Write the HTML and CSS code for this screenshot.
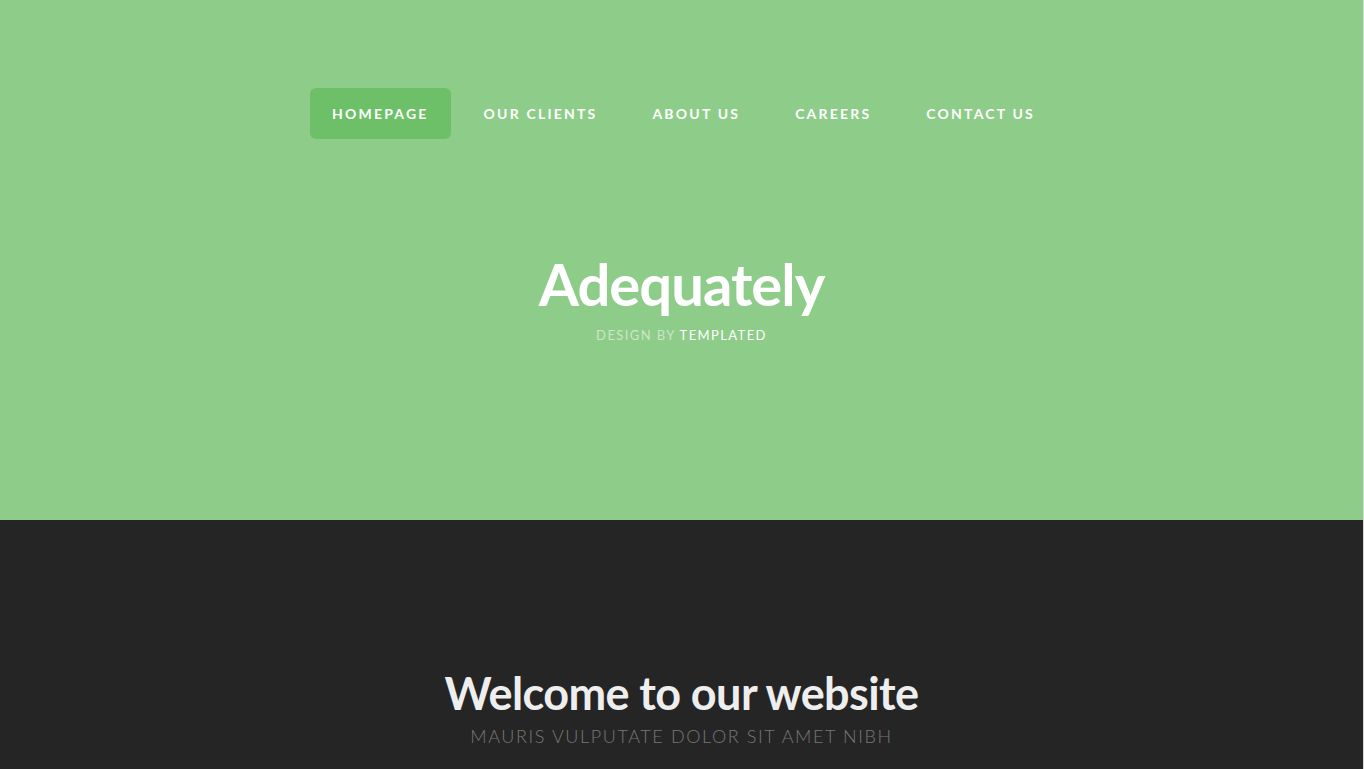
FILE: index.html
```html
<!DOCTYPE html>
<html>
<head>
<meta charset="utf-8">
<title>Adequately</title>
<link rel="stylesheet" href="styles.css">
</head>
<body>
<div class="page">
  <header class="hero">
    <nav class="nav">
      <a class="nav-item active" href="#">Homepage</a>
      <a class="nav-item" href="#">Our Clients</a>
      <a class="nav-item" href="#">About Us</a>
      <a class="nav-item" href="#">Careers</a>
      <a class="nav-item" href="#">Contact Us</a>
    </nav>
    <div class="logo">
      <h1 class="logo-title">Adequately</h1>
      <p class="logo-sub">Design by <a href="#">Templated</a></p>
    </div>
  </header>
  <section class="welcome">
    <h2 class="welcome-title">Welcome to our website</h2>
    <p class="welcome-sub">Mauris vulputate dolor sit amet nibh</p>
  </section>
</div>
</body>
</html>
```
FILE: styles.css
```css
html, body {
  margin: 0;
  padding: 0;
  height: 100%;
  overflow: hidden;
}
body {
  font-family: "Lato", "Open Sans", sans-serif;
  background: #252525;
}
.page {
  border-right: 1px solid #d8d8d8;
  min-height: 100%;
  background: #252525;
}
.hero {
  background: #8ecc89;
  height: 520px;
  display: flex;
  flex-direction: column;
  align-items: center;
}
.nav {
  display: flex;
  gap: 11px;
  margin-top: 88px;
  margin-left: 4px;
}
.nav-item {
  display: block;
  height: 51px;
  line-height: 51px;
  padding: 0 22px;
  border-radius: 6px;
  color: #fff;
  text-decoration: none;
  text-transform: uppercase;
  font-weight: 700;
  font-size: 14px;
  letter-spacing: 2.2px;
}
.nav-item.active {
  background: #6dc068;
}
.logo {
  margin-top: 110px;
  text-align: center;
}
.logo-title {
  margin: 0;
  color: #fff;
  font-size: 58px;
  font-weight: 700;
  line-height: 70px;
  letter-spacing: -1px;
}
.logo-sub {
  margin: 8px 0 0;
  font-size: 13px;
  letter-spacing: 1.4px;
  text-transform: uppercase;
  color: rgba(255, 255, 255, 0.55);
}
.logo-sub a {
  color: #fff;
  text-decoration: none;
}
.welcome {
  text-align: center;
  padding-top: 145px;
}
.welcome-title {
  margin: 0;
  color: #eee;
  font-size: 45px;
  font-weight: 700;
  line-height: 56px;
  letter-spacing: -0.6px;
}
.welcome-sub {
  margin: 4px 0 0;
  color: #777;
  font-size: 18px;
  font-weight: 300;
  letter-spacing: 1.6px;
  text-transform: uppercase;
}
```
